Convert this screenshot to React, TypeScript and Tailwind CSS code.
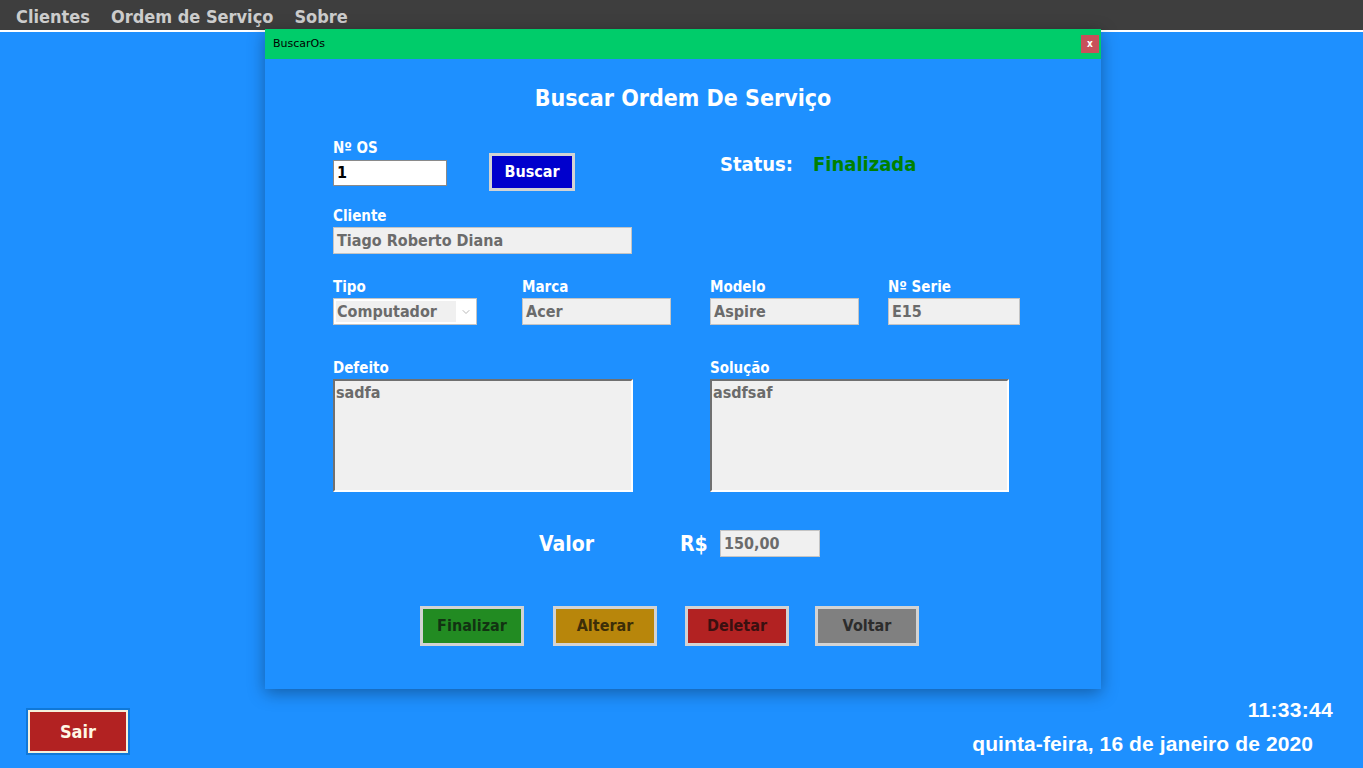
import { ChevronDown } from 'lucide-react';

const tahoma = { fontFamily: '"DejaVu Sans Condensed", "DejaVu Sans", sans-serif' };

function Field({ label, value, width }: { label: string; value: string; width: string }) {
  return (
    <div className="flex flex-col">
      <span className="text-[15px] font-bold text-white leading-[18px] h-[20px]">{label}</span>
      <div className={`${width} h-[27px] bg-[#f0f0f0] border border-[#c4c4c4] px-[3px] flex items-center text-[16px] font-bold text-[#6b6b6b]`}>
        {value}
      </div>
    </div>
  );
}

export default function App() {
  return (
    <div className="relative min-h-screen h-[768px] bg-[#1e90ff] flex flex-col overflow-hidden" style={tahoma}>
      {/* Menu bar */}
      <div className="h-[32px] bg-[#3e3e3e] flex items-center gap-[21px] px-[16px] pt-[2px] text-[18px] text-[#cccccc] font-bold border-b-2 border-white">
        <span>Clientes</span>
        <span>Ordem de Serviço</span>
        <span>Sobre</span>
      </div>

      <div className="flex-1" />

      {/* Footer */}
      <div className="flex items-end justify-between px-[28px] pb-[12px]">
        <button className="mb-[3px] w-[100px] h-[43px] bg-[#b22222] border-2 border-[#f5f0dc] outline-2 outline-[#0f78d8] text-[#fff8e6] text-[18px] font-bold">
          Sair
        </button>
        <div className="flex flex-col items-end pr-[22px] text-white font-bold" style={{ fontFamily: '"Liberation Sans", Arial, sans-serif' }}>
          <span className="text-[21px] leading-[24px] mr-[-20px] tracking-[0.3px]">11:33:44</span>
          <span className="text-[21px] leading-[24px] mt-[10px] tracking-[0.1px]">quinta-feira, 16 de janeiro de 2020</span>
        </div>
      </div>

      {/* BuscarOs window */}
      <div className="absolute left-[265px] top-[29px] w-[836px] h-[660px] bg-[#1e90ff] shadow-[0_4px_16px_rgba(0,0,0,0.35)] flex flex-col">
        <div className="h-[30px] bg-[#00cc6a] flex items-center justify-between pl-[8px] pr-[2px]">
          <span className="text-[11px] text-black" style={{ fontFamily: '"DejaVu Sans", sans-serif' }}>BuscarOs</span>
          <div className="w-[18px] h-[18px] bg-[#c8505a] flex items-center justify-center text-white text-[10px] font-bold leading-none">x</div>
        </div>

        <div className="flex-1 flex flex-col pl-[68px]">
          <div className="text-center text-white text-[23px] font-bold mt-[24px] pr-[68px] leading-[30px]">Buscar Ordem De Serviço</div>

          {/* Nº OS / Buscar / Status */}
          <div className="flex items-start mt-[26px] h-[54px]">
            <div className="flex flex-col">
              <span className="text-[15px] font-bold text-white leading-[18px] h-[21px]">Nº OS</span>
              <div className="w-[114px] h-[26px] bg-white border border-[#8a8a8a] px-[3px] flex items-center text-[16px] font-bold text-black">1</div>
            </div>
            <button className="ml-[42px] mt-[14px] w-[86px] h-[38px] bg-[#0000cd] border-[3px] border-[#d3d3d3] text-white text-[16px] font-bold">
              Buscar
            </button>
            <div className="ml-[145px] mt-[12px] flex items-center text-[20px] font-bold leading-[26px]">
              <span className="text-white">Status:</span>
              <span className="text-[#008000] ml-[20px]">Finalizada</span>
            </div>
          </div>

          {/* Cliente */}
          <div className="mt-[14px]">
            <Field label="Cliente" value="Tiago Roberto Diana" width="w-[299px]" />
          </div>

          {/* Tipo / Marca / Modelo / Serie */}
          <div className="flex mt-[24px]">
            <div className="flex flex-col w-[189px]">
              <span className="text-[15px] font-bold text-white leading-[18px] h-[20px]">Tipo</span>
              <div className="w-[144px] h-[27px] bg-white border border-[#c4c4c4] flex items-center">
                <div className="flex-1 h-[21px] ml-[2px] bg-[#f0f0f0] flex items-center px-[1px] text-[16px] font-bold text-[#6b6b6b]">Computador</div>
                <ChevronDown size={12} strokeWidth={1.5} className="mx-[4px] text-[#a0a0a0]" />
              </div>
            </div>
            <div className="w-[188px]">
              <Field label="Marca" value="Acer" width="w-[149px]" />
            </div>
            <div className="w-[178px]">
              <Field label="Modelo" value="Aspire" width="w-[149px]" />
            </div>
            <Field label="Nº Serie" value="E15" width="w-[132px]" />
          </div>

          {/* Defeito / Solução */}
          <div className="flex mt-[34px]">
            <div className="flex flex-col w-[377px]">
              <span className="text-[15px] font-bold text-white leading-[18px] h-[20px]">Defeito</span>
              <div className="w-[300px] h-[113px] bg-[#f0f0f0] border-2 border-t-[#707070] border-l-[#707070] border-b-white border-r-white px-[1px] pt-[2px] text-[16px] font-bold text-[#6b6b6b] leading-[20px]">
                sadfa
              </div>
            </div>
            <div className="flex flex-col">
              <span className="text-[15px] font-bold text-white leading-[18px] h-[20px]">Solução</span>
              <div className="w-[299px] h-[113px] bg-[#f0f0f0] border-2 border-t-[#707070] border-l-[#707070] border-b-white border-r-white px-[1px] pt-[2px] text-[16px] font-bold text-[#6b6b6b] leading-[20px]">
                asdfsaf
              </div>
            </div>
          </div>

          {/* Valor */}
          <div className="flex items-center mt-[35px] ml-[206px]">
            <span className="text-white text-[21px] font-bold w-[141px] pt-[2px]">Valor</span>
            <span className="text-white text-[21px] font-bold w-[40px] pt-[2px]">R$</span>
            <div className="w-[100px] h-[27px] bg-[#f0f0f0] border border-[#c4c4c4] px-[3px] flex items-center text-[16px] font-bold text-[#6b6b6b]">150,00</div>
          </div>

          {/* Actions */}
          <div className="flex mt-[45px] ml-[87px]">
            <button className="w-[104px] h-[40px] bg-[#228b22] border-[3px] border-[#d3d3d3] text-[16px] font-bold text-[#123312]">Finalizar</button>
            <button className="ml-[29px] w-[104px] h-[40px] bg-[#b8860b] border-[3px] border-[#d3d3d3] text-[16px] font-bold text-[#3d2e08]">Alterar</button>
            <button className="ml-[28px] w-[104px] h-[40px] bg-[#b22222] border-[3px] border-[#d3d3d3] text-[16px] font-bold text-[#3a1010]">Deletar</button>
            <button className="ml-[26px] w-[104px] h-[40px] bg-[#808080] border-[3px] border-[#d3d3d3] text-[16px] font-bold text-[#2c2c2c]">Voltar</button>
          </div>
        </div>
      </div>
    </div>
  );
}
